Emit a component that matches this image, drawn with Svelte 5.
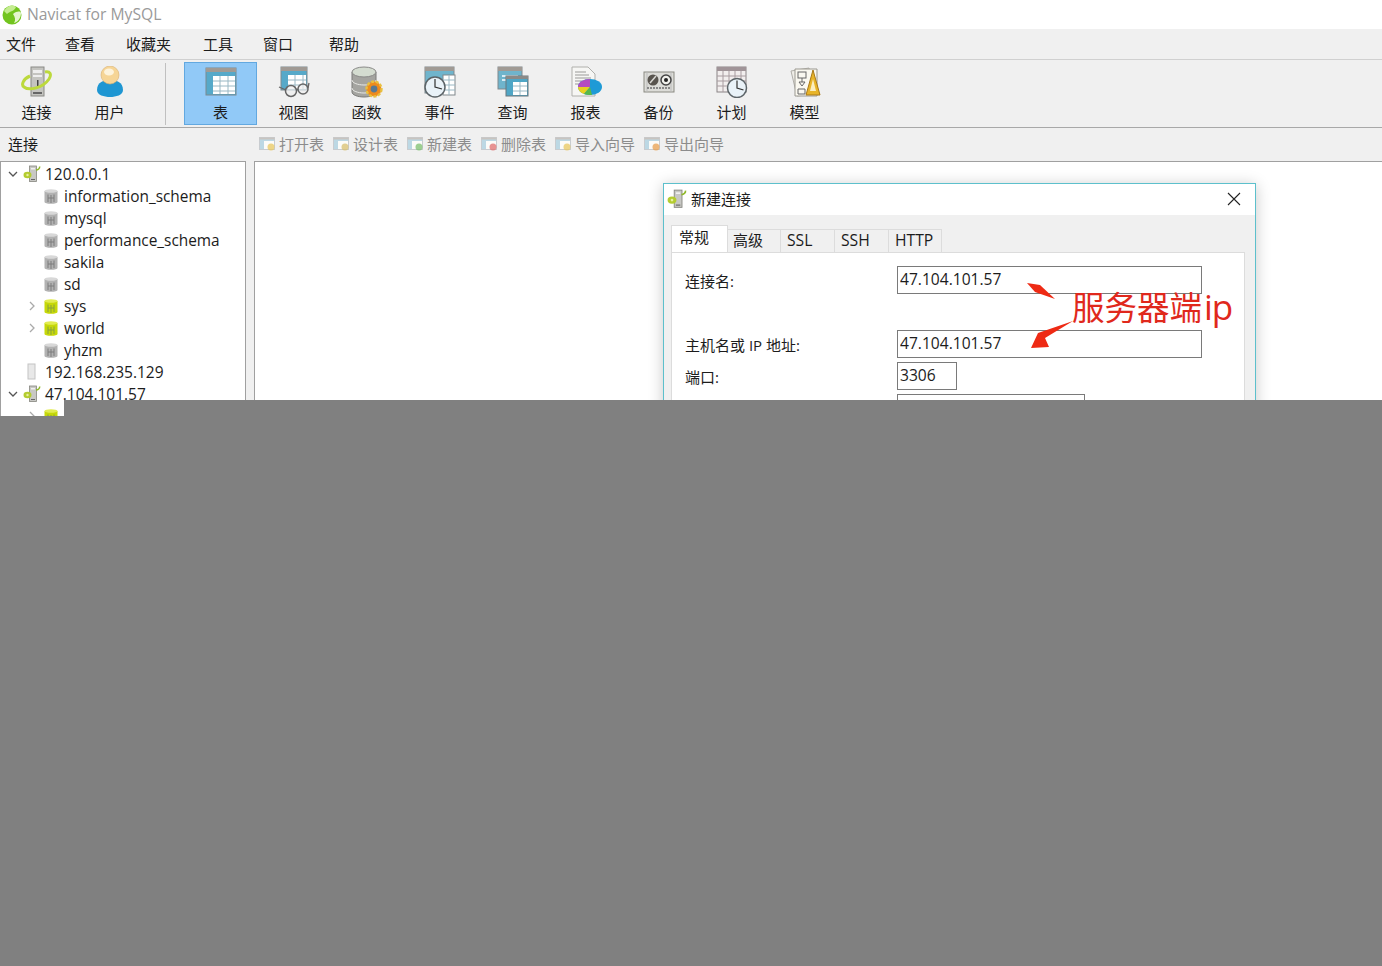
<script>
  const menus = ['文件', '查看', '收藏夹', '工具', '窗口', '帮助']
  const leftTools = [
    { id: 'conn', label: '连接' },
    { id: 'user', label: '用户' }
  ]
  const tools = [
    { id: 'table', label: '表', active: true },
    { id: 'view', label: '视图' },
    { id: 'func', label: '函数' },
    { id: 'event', label: '事件' },
    { id: 'query', label: '查询' },
    { id: 'report', label: '报表' },
    { id: 'backup', label: '备份' },
    { id: 'plan', label: '计划' },
    { id: 'model', label: '模型' }
  ]
  const actions = [
    { label: '打开表', badge: '#e8c860' },
    { label: '设计表', badge: '#d8c070' },
    { label: '新建表', badge: '#7cc070' },
    { label: '删除表', badge: '#e07070' },
    { label: '导入向导', badge: '#e8c860' },
    { label: '导出向导', badge: '#e8a050' }
  ]
  const tree = [
    { type: 'conn', label: '120.0.0.1', open: true },
    { type: 'db', label: 'information_schema' },
    { type: 'db', label: 'mysql' },
    { type: 'db', label: 'performance_schema' },
    { type: 'db', label: 'sakila' },
    { type: 'db', label: 'sd' },
    { type: 'dbon', label: 'sys' },
    { type: 'dbon', label: 'world' },
    { type: 'db', label: 'yhzm' },
    { type: 'off', label: '192.168.235.129' },
    { type: 'conn', label: '47.104.101.57', open: true },
    { type: 'dbon', label: '' }
  ]
  const tabs = ['常规', '高级', 'SSL', 'SSH', 'HTTP']
</script>

{#snippet connIcon()}
  <svg width="32" height="32" viewBox="0 0 32 32">
    <rect x="10" y="1" width="13" height="29" fill="#c4c4c0" stroke="#8a8a86" />
    <rect x="12" y="4" width="9" height="3" fill="#eee" />
    <rect x="12" y="9" width="9" height="2" fill="#eee" />
    <rect x="16" y="14" width="1.5" height="8" fill="#444" />
    <rect x="12" y="26" width="9" height="2" fill="#666" />
    <path d="M9 10 C2 13 0 19 3 21 C8 25 22 22 28 13 C31 8 29 5 24 6" fill="none" stroke="#bcd93c" stroke-width="3" />
  </svg>
{/snippet}

{#snippet smallConn(size)}
  <svg width={size} height={size} viewBox="0 0 18 18">
    <rect x="6.500" y="1" width="7" height="15.500" fill="#c8c8c4" stroke="#85857f" stroke-width="0.800" />
    <rect x="8" y="3" width="4" height="1.500" fill="#f0f0f0" />
    <rect x="8" y="14" width="4" height="1" fill="#666" />
    <ellipse cx="4.500" cy="10" rx="4" ry="3.300" fill="#b4cc30" />
    <circle cx="4.500" cy="10" r="1.200" fill="#e8f0a0" />
    <path d="M13 5c2 0 4-1.500 3.600-3.500" fill="none" stroke="#8fb828" stroke-width="1.500" />
  </svg>
{/snippet}

{#snippet tableBase(x, y, w, h)}
  <rect {x} {y} width={w} height={h} fill="#56a9c9" stroke="#7d8a90" />
  <rect {x} {y} width={w} height="4" fill="#a09a94" />
  <rect x={x + 7} y={y + 8} width={w - 8} height={h - 9} fill="#fff" />
  <path d="M{x + 7} {y + 13}h{w - 8}M{x + 7} {y + 18}h{w - 8}M{x + 7} {y + 23}h{w - 8}M{x + 14} {y + 8}v{h - 9}M{x + 22} {y + 8}v{h - 9}" stroke="#9ab8c4" fill="none" />
{/snippet}

{#snippet clock(cx, cy, r)}
  <circle {cx} {cy} {r} fill="#e9f2f8" stroke="#5c6468" stroke-width="1.5" />
  <path d="M{cx} {cy - r + 2}V{cy}L{cx + r - 3} {cy + 2}" fill="none" stroke="#333" stroke-width="1.2" />
{/snippet}

{#snippet toolIcon(id)}
  {#if id === 'conn'}
    {@render connIcon()}
  {:else if id === 'user'}
    <svg width="32" height="32" viewBox="0 0 32 32">
      <path d="M3 24 C3 16 10 14 16 14 C22 14 29 16 29 24 C29 29 22 31 16 31 C10 31 3 29 3 24Z" fill="#1e96d2" />
      <circle cx="16" cy="9" r="9" fill="#f6d596" stroke="#d8b070" stroke-width="0.6" />
      <ellipse cx="15" cy="6" rx="5" ry="3.500" fill="#fdf3dc" />
    </svg>
  {:else if id === 'table'}
    <svg width="32" height="32" viewBox="0 0 32 32">{@render tableBase(1, 2, 30, 27)}</svg>
  {:else if id === 'view'}
    <svg width="32" height="32" viewBox="0 0 32 32">
      {@render tableBase(3, 1, 26, 23)}
      <circle cx="13" cy="25" r="5.500" fill="#eee" fill-opacity="0.7" stroke="#666" stroke-width="1.500" />
      <circle cx="25" cy="23" r="5" fill="#eee" fill-opacity="0.7" stroke="#666" stroke-width="1.500" />
      <path d="M18 24l2-1M8 24L1 21M30 22l1-5" stroke="#666" stroke-width="1.300" fill="none" />
    </svg>
  {:else if id === 'func'}
    <svg width="32" height="32" viewBox="0 0 32 32">
      <path d="M1 6v20c0 3 6 5 12 5s12-2 12-5V6Z" fill="#a4a4a0" stroke="#7a7a78" />
      <path d="M1 14c0 3 6 5 12 5s12-2 12-5M1 22c0 3 6 5 12 5s12-2 12-5" fill="none" stroke="#e8e8e4" />
      <ellipse cx="13" cy="6" rx="12" ry="5" fill="#d4dcd0" stroke="#8a8a88" />
      <circle cx="23" cy="23" r="7.500" fill="#ee8a1c" stroke="#e8c040" stroke-width="2.400" stroke-dasharray="3 1.600" />
      <circle cx="23" cy="23" r="3.400" fill="#5a7890" />
    </svg>
  {:else if id === 'event'}
    <svg width="32" height="32" viewBox="0 0 32 32">
      <rect x="1" y="1" width="29" height="26" fill="#6fb4cc" stroke="#80888c" />
      <rect x="1" y="1" width="29" height="4" fill="#a09a94" />
      <rect x="19" y="9" width="12" height="20" fill="#fff" stroke="#80888c" />
      <path d="M19 14h12M19 19h12M19 24h12M25 9v20" stroke="#9ab8c4" fill="none" />
      {@render clock(11, 21, 10)}
    </svg>
  {:else if id === 'query'}
    <svg width="32" height="32" viewBox="0 0 32 32">
      <rect x="1" y="1" width="24" height="22" fill="#6fb4cc" stroke="#80888c" />
      <rect x="1" y="1" width="24" height="4" fill="#a09a94" />
      <path d="M5 10h16M5 14h16" stroke="#d8ecf4" stroke-width="2" />
      <rect x="9" y="10" width="22" height="20" fill="#4fa6c6" stroke="#6a767c" />
      <rect x="9" y="10" width="22" height="3" fill="#8a8a88" />
      <rect x="16" y="16" width="14" height="13" fill="#fff" />
      <path d="M16 20h14M16 25h14M23 16v13" stroke="#9ab8c4" fill="none" />
    </svg>
  {:else if id === 'report'}
    <svg width="32" height="32" viewBox="0 0 32 32">
      <path d="M2 1h16l7 7v22H2Z" fill="#f6f6f4" stroke="#b0b0ac" />
      <path d="M5 6h11M5 9h14M5 12h16M5 15h8M5 18h5" stroke="#9a9a98" />
      <ellipse cx="20" cy="21" rx="12" ry="8" fill="#1e9ad6" />
      <path d="M20 21L8 21A12 8 0 0 1 20 13Z" fill="#b44cc0" />
      <path d="M20 21L8 21A12 8 0 0 0 14 28Z" fill="#e8d020" />
      <path d="M20 21L14 28A12 8 0 0 0 22 29Z" fill="#58b848" />
    </svg>
  {:else if id === 'backup'}
    <svg width="32" height="32" viewBox="0 0 32 32">
      <rect x="1" y="6" width="30" height="20" fill="#dcdcd8" stroke="#8a8a82" />
      <path d="M4 6V26M28 6V26" stroke="#bbb" />
      <circle cx="10" cy="14" r="5.500" fill="#58544e" />
      <path d="M7 17l6-7" stroke="#d8d8d4" stroke-width="1.500" />
      <circle cx="23" cy="14" r="5" fill="#f0f0ec" stroke="#444" stroke-width="1.500" />
      <circle cx="23" cy="14" r="2" fill="#222" />
      <path d="M4 22h24" stroke="#888" stroke-width="2" stroke-dasharray="2 1" />
    </svg>
  {:else if id === 'plan'}
    <svg width="32" height="32" viewBox="0 0 32 32">
      <rect x="1" y="1" width="29" height="25" fill="#f2eeee" stroke="#8a8486" />
      <rect x="1" y="1" width="29" height="4" fill="#a09498" />
      <path d="M1 10h29M1 15h29M1 20h29M7 5v21M13 5v21M19 5v21M25 5v21" stroke="#a89ca0" fill="none" />
      {@render clock(21, 22, 9.500)}
    </svg>
  {:else if id === 'model'}
    <svg width="32" height="32" viewBox="0 0 32 32">
      <path d="M2 5l18-3 4 26-16 2Z" fill="#f0eee8" stroke="#b0aea8" />
      <path d="M6 3h22v27H6Z" fill="#faf8f0" stroke="#9a9890" />
      <rect x="9" y="6" width="8" height="6" fill="none" stroke="#666" />
      <path d="M13 12v4M10 16h6l-3 4ZM9 23h7v5H9Z" fill="none" stroke="#666" />
      <path d="M24 4L31 29H17Z" fill="#e8b428" stroke="#a87818" />
      <path d="M24 13L27 25H21Z" fill="#fbeec0" />
    </svg>
  {/if}
{/snippet}

{#snippet dbIcon(on)}
  <svg width="14" height="15" viewBox="0 0 14 15">
    <path d="M0.500 2v11c0 1 2.800 1.800 6.500 1.800s6.500-.8 6.500-1.800V2Z" fill={on ? '#c6d808' : '#b2b2b2'} />
    <ellipse cx="7" cy="2" rx="6.500" ry="1.800" fill={on ? '#e2ec50' : '#d8d8d8'} />
    <path d="M4 5.500v7.500M7 6v8M10 5.500v7.500M4 9h6" stroke={on ? '#86a040' : '#7c7c7c'} fill="none" />
  </svg>
{/snippet}

<div class="window">
  <div class="titlebar">
    <svg class="logo" width="22" height="22" viewBox="0 0 22 22">
      <circle cx="11" cy="12" r="9.500" fill="#72c41e" />
      <path d="M3 8c3-5 8-7 12-4-1 4-6 4-9 7Z" fill="#c4ec90" />
      <path d="M12 11c4-3 7-3 8-1 0 5-3 9-7 10 2-3 1-6-1-9Z" fill="#e4f5cc" />
    </svg>
    <span>Navicat for MySQL</span>
  </div>

  <div class="menubar">
    {#each menus as m}<span>{m}</span>{/each}
  </div>

  <div class="toolbar">
    {#each leftTools as t}
      <div class="tool">
        {@render toolIcon(t.id)}
        <span>{t.label}</span>
      </div>
    {/each}
    <div class="sep"></div>
    {#each tools as t}
      <div class="tool" class:active={t.active}>
        {@render toolIcon(t.id)}
        <span>{t.label}</span>
      </div>
    {/each}
  </div>

  <div class="objbar">
    <div class="objtitle">连接</div>
    <div class="actions">
      {#each actions as a}
        <div class="action">
          <svg width="17" height="16" viewBox="0 0 17 16">
            <rect x="0.500" y="1.500" width="15" height="12" fill="#bcd8e4" stroke="#c8ccd0" />
            <rect x="0.500" y="1.500" width="15" height="2" fill="#c8c4c0" />
            <rect x="5" y="5" width="10" height="8" fill="#fbfbf8" />
            <circle cx="12" cy="11" r="3.500" fill={a.badge} fill-opacity="0.75" />
          </svg>
          <span>{a.label}</span>
        </div>
      {/each}
    </div>
  </div>

  <div class="main">
    <div class="tree">
      {#each tree as row}
        <div class="row" class:child={row.type === 'db' || row.type === 'dbon'}>
          <span class="arrow">
            {#if row.open}
              <svg width="10" height="10" viewBox="0 0 10 10"><path d="M1 3l4 4 4-4" fill="none" stroke="#555" stroke-width="1.300" /></svg>
            {:else if row.type === 'dbon'}
              <svg width="10" height="10" viewBox="0 0 10 10"><path d="M3 1l4 4-4 4" fill="none" stroke="#aaa" stroke-width="1.300" /></svg>
            {/if}
          </span>
          <span class="ticon">
            {#if row.type === 'conn'}
              {@render smallConn(18)}
            {:else if row.type === 'off'}
              <svg width="18" height="18" viewBox="0 0 18 18"><rect x="5" y="1" width="7" height="15" fill="#e8e8e8" stroke="#c4c4c4" /></svg>
            {:else}
              {@render dbIcon(row.type === 'dbon')}
            {/if}
          </span>
          <span>{row.label}</span>
        </div>
      {/each}
    </div>

    <div class="content">
      <div class="dialog">
        <div class="dlgtitle">
          {@render smallConn(20)}
          <span>新建连接</span>
          <svg class="close" width="14" height="14" viewBox="0 0 14 14"><path d="M1 1l12 12M13 1L1 13" stroke="#222" stroke-width="1.100" /></svg>
        </div>
        <div class="dlgbody">
          <div class="tabs">
            {#each tabs as t, i}
              <div class="tab" class:on={i === 0} class:latin={i > 1}>{t}</div>
            {/each}
          </div>
          <div class="panel">
            <div class="field first">
              <label for="f-name">连接名:</label>
              <input id="f-name" class="wide" value="47.104.101.57" readonly />
            </div>
            <div class="field second">
              <label for="f-host">主机名或 IP 地址:</label>
              <input id="f-host" class="wide" value="47.104.101.57" readonly />
            </div>
            <div class="field">
              <label for="f-port">端口:</label>
              <input id="f-port" class="port" value="3306" readonly />
            </div>
            <div class="field">
              <label for="f-user"></label>
              <input id="f-user" class="user" readonly />
            </div>
          </div>
        </div>

        <svg class="arrows" width="593" height="220" viewBox="0 0 593 220">
          <path d="M363 99L376 101 391 115 371 108Z" fill="#ee2a14" />
          <path d="M409 137L374 149 367 164 385 163 381 154Z" fill="#ee2a14" />
        </svg>
        <div class="note">服务器端<span>ip</span></div>
      </div>
    </div>
  </div>

  <div class="mask"></div>
  <div class="mask notch"></div>
</div>

<style>
  :global(body) {
    margin: 0;
    background: #808080;
  }

  .window {
    position: relative;
    width: 1382px;
    height: 966px;
    overflow: hidden;
    display: flex;
    flex-direction: column;
    background: #f0f0f0;
    color: #1c1c1c;
    font-family: "Open Sans", "Noto Sans CJK SC", sans-serif;
    font-size: 15px;
  }

  .titlebar {
    height: 28px;
    padding-bottom: 1px;
    flex: none;
    background: #fff;
    display: flex;
    align-items: center;
    padding-left: 1px;
    gap: 4px;
    color: #9a9a9a;
    font-size: 15.700px;
  }

  .menubar {
    height: 31px;
    flex: none;
    display: flex;
    align-items: center;
    padding: 0 0 2px 6px;
    gap: 30px;
    border-bottom: 1px solid #d0d0d0;
    box-sizing: border-box;
  }

  .menubar span:nth-child(2) {
    margin-left: -1px;
  }

  .menubar span:nth-child(3) {
    margin-left: 1px;
  }

  .menubar span:nth-child(4) {
    margin-left: 2px;
  }

  .menubar span:last-child {
    margin-left: 6px;
  }

  .toolbar {
    height: 68px;
    flex: none;
    display: flex;
    align-items: center;
    box-sizing: border-box;
    border-bottom: 1px solid #a8a8a8;
  }

  .tool {
    width: 73px;
    height: 63px;
    flex: none;
    box-sizing: border-box;
    display: flex;
    flex-direction: column;
    align-items: center;
    padding-top: 4px;
    gap: 4px;
    line-height: 20px;
  }

  .tool svg {
    flex: none;
  }

  .tool.active {
    background: #91c9f7;
    border: 1px solid #62a8e0;
    padding-top: 3px;
  }

  .sep {
    width: 1px;
    height: 62px;
    background: #c0c0c0;
    margin: 0 18px 0 19px;
    flex: none;
  }

  .objbar {
    height: 33px;
    flex: none;
    display: flex;
    align-items: center;
    box-sizing: border-box;
    padding-bottom: 2px;
  }

  .objtitle {
    width: 259px;
    padding-left: 8px;
    box-sizing: border-box;
  }

  .actions {
    display: flex;
    gap: 9px;
    color: #8c8c8c;
  }

  .action {
    display: flex;
    align-items: center;
    gap: 3px;
  }

  .main {
    flex: 1;
    display: flex;
    gap: 8px;
    min-height: 0;
  }

  .tree {
    width: 246px;
    flex: none;
    box-sizing: border-box;
    background: #fff;
    border: 1px solid #a0a0a0;
    padding-top: 1px;
    font-size: 15.500px;
  }

  .row {
    height: 22px;
    display: flex;
    align-items: center;
    padding-left: 7px;
    white-space: nowrap;
  }

  .row.child {
    padding-left: 26px;
    font-size: 15.400px;
  }

  .arrow {
    width: 10px;
    height: 10px;
    display: flex;
    margin-right: 5px;
  }

  .ticon {
    width: 18px;
    height: 18px;
    display: flex;
    align-items: center;
    margin-right: 4px;
  }

  .row.child .ticon {
    margin-left: 1px;
    margin-right: 3px;
    padding-left: 1px;
    box-sizing: border-box;
  }

  .content {
    flex: 1;
    background: #fff;
    border-left: 1px solid #a0a0a0;
    border-top: 1px solid #a0a0a0;
    position: relative;
  }

  .dialog {
    position: absolute;
    left: 408px;
    top: 21px;
    width: 593px;
    height: 500px;
    box-sizing: border-box;
    background: #f0f0f0;
    border: 1px solid #5cc0cc;
    box-shadow: 0 2px 14px rgba(0, 0, 0, 0.22);
  }

  .dlgtitle {
    height: 31px;
    box-sizing: border-box;
    padding: 0 0 2px 3px;
    background: #fff;
    display: flex;
    align-items: center;
    gap: 4px;
    position: relative;
  }

  .close {
    position: absolute;
    right: 14px;
    top: 8px;
  }

  .dlgbody {
    padding: 10px 10px 0 7px;
  }

  .tabs {
    display: flex;
    height: 27px;
    align-items: flex-end;
  }

  .tab {
    height: 23px;
    box-sizing: border-box;
    padding: 0 5px;
    min-width: 53px;
    line-height: 20px;
    background: #f0f0f0;
    border: 1px solid #dcdcdc;
    border-bottom: none;
    border-left: none;
  }

  .tab.latin {
    padding-left: 6px;
    font-size: 15.700px;
  }

  .tab.on {
    height: 27px;
    width: 57px;
    padding: 0 7px;
    background: #fff;
    line-height: 22px;
    border-left: 1px solid #dcdcdc;
  }

  .tab:nth-child(3),
  .tab:nth-child(4) {
    width: 54px;
  }

  .tab:nth-child(5) {
    width: 52px;
  }

  .panel {
    background: #fff;
    border: 1px solid #dcdcdc;
    height: 300px;
    padding: 13px 0 0 13px;
  }

  .field {
    display: flex;
    align-items: center;
    margin-bottom: 4px;
  }

  .field.first {
    margin-bottom: 36px;
  }

  .field label {
    width: 212px;
    flex: none;
    padding-top: 1px;
  }

  input {
    box-sizing: border-box;
    height: 28px;
    border: 1px solid #7a7a7a;
    padding: 0 2px 2px;
    font: inherit;
    font-size: 15.600px;
    color: #1c1c1c;
    background: #fff;
    outline: none;
  }

  .wide {
    width: 305px;
  }

  .port {
    width: 60px;
  }

  .user {
    width: 188px;
  }

  .arrows {
    position: absolute;
    left: 0;
    top: 0;
    pointer-events: none;
  }

  .note {
    position: absolute;
    left: 408px;
    top: 101px;
    font-size: 32.500px;
    line-height: 44px;
    color: #e0281c;
    white-space: nowrap;
  }

  .note span {
    font-size: 35px;
    margin-left: 2px;
    letter-spacing: -1px;
  }

  .mask {
    position: absolute;
    left: 64px;
    right: 0;
    top: 400px;
    bottom: 0;
    background: #808080;
  }

  .mask.notch {
    left: 0;
    top: 416px;
  }
</style>
